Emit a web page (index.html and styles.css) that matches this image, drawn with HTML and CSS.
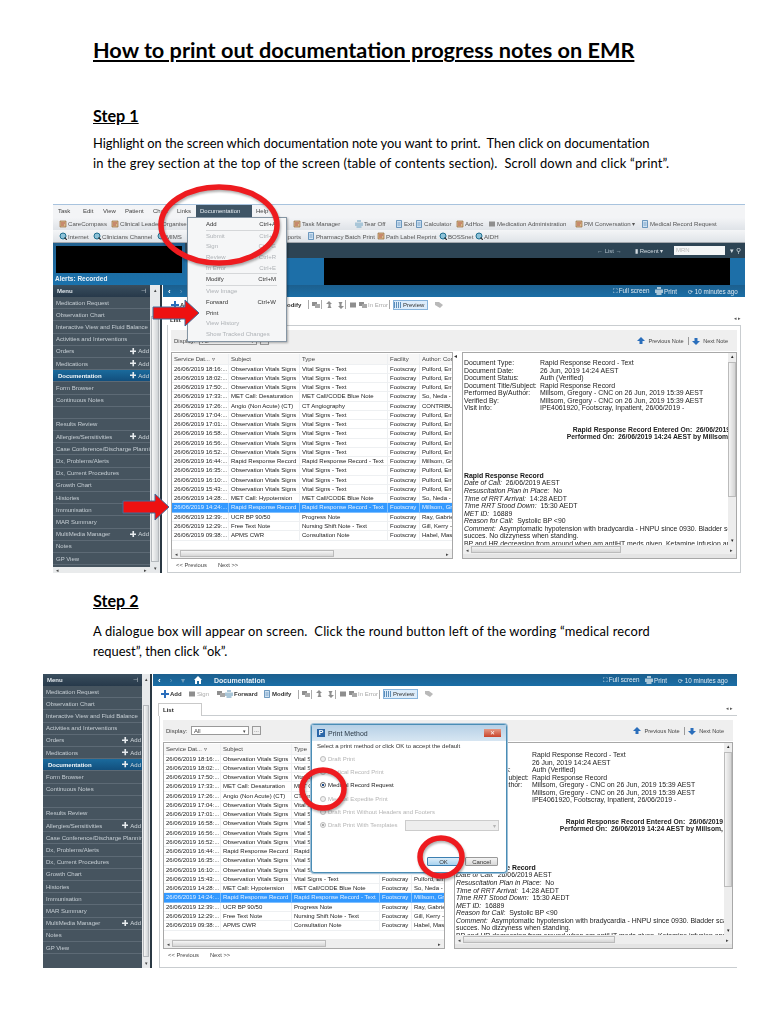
FILE: index.html
```html
<!DOCTYPE html>
<html lang="en">
<head>
<meta charset="utf-8">
<title>How to print out documentation progress notes on EMR</title>
<link rel="stylesheet" href="styles.css">
</head>
<body>
<svg class="defs" width="0" height="0" aria-hidden="true">
  <symbol id="plus" viewBox="0 0 8 8"><path d="M3 0h2v3h3v2H5v3H3V5H0V3h3z"/></symbol>
  <symbol id="globe" viewBox="0 0 8 8"><circle cx="4" cy="4" r="3" fill="#8ec2d8" stroke="#1f6f8f"/><path d="M5.500 5.500 8 8" stroke="#333" stroke-width="1.200"/></symbol>
  <symbol id="doc" viewBox="0 0 8 8"><path d="M1 1h6v6H1z" fill="#d7b98c" stroke="#9a6a3c" stroke-width=".7"/><path d="M2 3h4M2 5h3" stroke="#a33" stroke-width=".7"/></symbol>
  <symbol id="note" viewBox="0 0 8 8"><path d="M1.500.5h5v7h-5z" fill="#cfe2f2" stroke="#3c76a8" stroke-width=".7"/><path d="M2.500 3h3M2.500 5h3" stroke="#3c76a8" stroke-width=".6"/></symbol>
  <symbol id="gray" viewBox="0 0 8 8"><path d="M1 1.500h6v5H1z" fill="#8e8e8e"/></symbol>
  <symbol id="copy" viewBox="0 0 8 8"><path d="M0 1h5v4H0z" fill="#8e8e8e"/><path d="M3 3h5v4H3z" fill="#a8a8a8"/></symbol>
  <symbol id="hand" viewBox="0 0 8 8"><path d="M1 3l3-3 3 3H5.500v2l1 2h-4l1-2V3z" fill="#8e8e8e"/></symbol>
  <symbol id="tag" viewBox="0 0 8 8"><path d="M0 1h4l4 3-3 3-5-3z" fill="#b9b9b9"/></symbol>
  <symbol id="bars" viewBox="0 0 8 8"><path d="M.5 1v6M2.500 1v6M4.500 1v6M6.500 1v6" stroke="#3c76a8" stroke-width=".8"/></symbol>
  <symbol id="print" viewBox="0 0 8 8"><path d="M2 0h4v2H2zM0 2.500h8v3.500H6.500V8h-5V6H0z" fill="#a9c6d8"/></symbol>
  <symbol id="up" viewBox="0 0 8 8"><path d="M4 0l4 4H5.500v3h-3V4H0z"/></symbol>
  <symbol id="home" viewBox="0 0 8 8"><path d="M4 0l4 4H7v4H5V5H3v3H1V4H0z" fill="#fff"/></symbol>
</svg>
<main class="page">
  <h1 class="doc-title">How to print out documentation progress notes on EMR</h1>

  <h2 class="step step-one">Step 1</h2>
  <p class="lead lead-one"><span class="fit-a">Highlight on the screen which documentation note you want to print.&nbsp; Then click on documentation</span><br><span class="fit-b">in the grey section at the top of the screen (table of contents section).&nbsp; Scroll down and click “print”.</span></p>

  <section class="shot shot-one">
    <div class="app-menu">
      <span class="m-task">Task</span><span class="m-edit">Edit</span><span class="m-view">View</span><span class="m-patient">Patient</span><span class="m-chart">Chart</span><span class="m-links">Links</span><span class="m-doc">Documentation</span><span class="m-help">Help</span>
    </div>
    <div class="toolbar tb-one">
      <span class="tool"><svg class="ic"><use href="#doc"/></svg>CareCompass</span>
      <span class="tool"><svg class="ic"><use href="#doc"/></svg>Clinical Leader Organiser</span>
      <span class="tool"><svg class="ic"><use href="#doc"/></svg>Task Manager</span>
      <span class="tool"><svg class="ic"><use href="#print"/></svg>Tear Off</span>
      <span class="tool"><svg class="ic"><use href="#note"/></svg>Exit</span>
      <span class="tool"><svg class="ic"><use href="#note"/></svg>Calculator</span>
      <span class="tool"><svg class="ic"><use href="#doc"/></svg>AdHoc</span>
      <span class="tool"><svg class="ic"><use href="#gray"/></svg>Medication Administration</span>
      <span class="tool"><svg class="ic"><use href="#doc"/></svg>PM Conversation ▾</span>
      <span class="tool"><svg class="ic"><use href="#note"/></svg>Medical Record Request</span>
    </div>
    <div class="toolbar tb-two">
      <span class="tool"><svg class="ic"><use href="#globe"/></svg>Internet</span>
      <span class="tool"><svg class="ic"><use href="#globe"/></svg>Clinicians Channel</span>
      <span class="tool"><svg class="ic"><use href="#globe"/></svg>MIMS</span>
      <span class="tool tool-end">Reports</span>
      <span class="tool"><svg class="ic"><use href="#note"/></svg>Pharmacy Batch Print</span>
      <span class="tool"><svg class="ic"><use href="#doc"/></svg>Path Label Reprint</span>
      <span class="tool"><svg class="ic"><use href="#globe"/></svg>BOSSnet</span>
      <span class="tool"><svg class="ic"><use href="#globe"/></svg>AIDH</span>
    </div>
    <div class="patient-head">
      <div class="patient-left">
        <div class="redact redact-left"></div>
        <div class="alerts">Alerts: Recorded</div>
      </div>
      <div class="patient-right">
        <div class="nav-row"><span class="nav-list">← List →</span><span class="nav-recent">▮ Recent ▾</span><span class="mrn">MRN</span><span class="nav-find">▾ ⚲</span></div>
        <div class="banner-row"><div class="redact redact-right"></div></div>
      </div>
    </div>
    <div class="emr">
      <aside class="side">
        <div class="side-head"><span>Menu</span><span class="pin">⊣</span></div>
        <div class="side-item">Medication Request</div>
        <div class="side-item">Observation Chart</div>
        <div class="side-item">Interactive View and Fluid Balance</div>
        <div class="side-item">Activities and Interventions</div>
        <div class="side-item">Orders<span class="add"><svg class="plus"><use href="#plus"/></svg>Add</span></div>
        <div class="side-item">Medications<span class="add"><svg class="plus"><use href="#plus"/></svg>Add</span></div>
        <div class="side-item is-current">Documentation<span class="add"><svg class="plus"><use href="#plus"/></svg>Add</span></div>
        <div class="side-item">Form Browser</div>
        <div class="side-item">Continuous Notes</div>
        <div class="side-item"></div>
        <div class="side-item">Results Review</div>
        <div class="side-item">Allergies/Sensitivities<span class="add"><svg class="plus"><use href="#plus"/></svg>Add</span></div>
        <div class="side-item">Case Conference/Discharge Planning</div>
        <div class="side-item">Dx, Problems/Alerts</div>
        <div class="side-item">Dx, Current Procedures</div>
        <div class="side-item">Growth Chart</div>
        <div class="side-item">Histories</div>
        <div class="side-item">Immunisation</div>
        <div class="side-item">MAR Summary</div>
        <div class="side-item">MultiMedia Manager<span class="add"><svg class="plus"><use href="#plus"/></svg>Add</span></div>
        <div class="side-item">Notes</div>
        <div class="side-item">GP View</div>
        <div class="side-foot"><span>◂</span><span>▸</span></div>
      </aside>
      <div class="side-scroll"><span class="arrow-btn">▴</span><span class="thumb"></span><span class="arrow-btn">▾</span></div>
      <div class="side-rule"></div>
      <div class="main">
        <div class="band"><span class="band-nav"><b>‹</b> <i>›</i></span><span class="band-title"></span><span class="band-act band-fs">⛶ Full screen</span><span class="band-act band-pr"><svg class="ic"><use href="#print"/></svg>Print</span><span class="band-act band-tm">⟳ 10 minutes ago</span></div>
        <div class="doc-tools">
          <span class="dt"><svg class="ic ic-blue"><use href="#plus"/></svg>Add</span>
          <span class="dt dim"><svg class="ic"><use href="#gray"/></svg>Sign</span>
          <span class="dt"><svg class="ic"><use href="#copy"/></svg></span>
          <span class="dt"><svg class="ic"><use href="#print"/></svg>Forward</span>
          <span class="dt dt-sep"><svg class="ic"><use href="#note"/></svg>Modify</span>
          <span class="dt dt-sep"><svg class="ic"><use href="#copy"/></svg></span>
          <span class="dt"><svg class="ic"><use href="#hand"/></svg></span>
          <span class="dt dt-sep"><svg class="ic ic-flip"><use href="#hand"/></svg></span>
          <span class="dt"><svg class="ic"><use href="#gray"/></svg></span>
          <span class="dt dim dt-sep"><svg class="ic"><use href="#copy"/></svg>In Error</span>
          <span class="dt preview"><svg class="ic"><use href="#bars"/></svg>Preview</span>
          <span class="dt"><svg class="ic"><use href="#tag"/></svg></span>
        </div>
        <div class="tabs"><span class="tab tab-flat">List</span><span class="tab-pager">◂ ▸</span></div>
        <div class="panel">
          <div class="filter">
            <span class="disp">Display:</span><span class="combo">All<em>▾</em></span><span class="dots">...</span>
            <span class="pager"><svg class="ic ic-blue"><use href="#up"/></svg>Previous Note<i></i><svg class="ic ic-blue ic-down"><use href="#up"/></svg>Next Note</span>
          </div>
          <div class="split">
            <div class="list-col">
              <div class="grid-box">
                <div class="row row-head"><span>Service Dat... ▿</span><span>Subject</span><span>Type</span><span>Facility</span><span>Author: Cor</span></div>
                <div class="row"><span>26/06/2019 18:16:...</span><span>Observation Vitals Signs</span><span>Vital Signs - Text</span><span>Footscray</span><span>Pulford, Emily</span></div>
                <div class="row"><span>26/06/2019 18:02:...</span><span>Observation Vitals Signs</span><span>Vital Signs - Text</span><span>Footscray</span><span>Pulford, Emily</span></div>
                <div class="row"><span>26/06/2019 17:50:...</span><span>Observation Vitals Signs</span><span>Vital Signs - Text</span><span>Footscray</span><span>Pulford, Emily</span></div>
                <div class="row"><span>26/06/2019 17:33:...</span><span>MET Call: Desaturation</span><span>MET Call/CODE Blue Note</span><span>Footscray</span><span>So, Neda - Reg</span></div>
                <div class="row"><span>26/06/2019 17:26:...</span><span>Angio (Non Acute) (CT)</span><span>CT Angiography</span><span>Footscray</span><span>CONTRIBUTOR</span></div>
                <div class="row"><span>26/06/2019 17:04:...</span><span>Observation Vitals Signs</span><span>Vital Signs - Text</span><span>Footscray</span><span>Pulford, Emily</span></div>
                <div class="row"><span>26/06/2019 17:01:...</span><span>Observation Vitals Signs</span><span>Vital Signs - Text</span><span>Footscray</span><span>Pulford, Emily</span></div>
                <div class="row"><span>26/06/2019 16:58:...</span><span>Observation Vitals Signs</span><span>Vital Signs - Text</span><span>Footscray</span><span>Pulford, Emily</span></div>
                <div class="row"><span>26/06/2019 16:56:...</span><span>Observation Vitals Signs</span><span>Vital Signs - Text</span><span>Footscray</span><span>Pulford, Emily</span></div>
                <div class="row"><span>26/06/2019 16:52:...</span><span>Observation Vitals Signs</span><span>Vital Signs - Text</span><span>Footscray</span><span>Pulford, Emily</span></div>
                <div class="row"><span>26/06/2019 16:44:...</span><span>Rapid Response Record</span><span>Rapid Response Record - Text</span><span>Footscray</span><span>Millsom, Greg</span></div>
                <div class="row"><span>26/06/2019 16:35:...</span><span>Observation Vitals Signs</span><span>Vital Signs - Text</span><span>Footscray</span><span>Pulford, Emily</span></div>
                <div class="row"><span>26/06/2019 16:10:...</span><span>Observation Vitals Signs</span><span>Vital Signs - Text</span><span>Footscray</span><span>Pulford, Emily</span></div>
                <div class="row"><span>26/06/2019 15:43:...</span><span>Observation Vitals Signs</span><span>Vital Signs - Text</span><span>Footscray</span><span>Pulford, Emily</span></div>
                <div class="row"><span>26/06/2019 14:28:...</span><span>MET Call: Hypotension</span><span>MET Call/CODE Blue Note</span><span>Footscray</span><span>So, Neda - Reg</span></div>
                <div class="row is-picked"><span>26/06/2019 14:24:...</span><span>Rapid Response Record</span><span>Rapid Response Record - Text</span><span>Footscray</span><span>Millsom, Greg</span></div>
                <div class="row"><span>26/06/2019 12:39:...</span><span>UCR BP 90/50</span><span>Progress Note</span><span>Footscray</span><span>Ray, Gabriel</span></div>
                <div class="row"><span>26/06/2019 12:29:...</span><span>Free Text Note</span><span>Nursing Shift Note - Text</span><span>Footscray</span><span>Gill, Kerry - RN</span></div>
                <div class="row"><span>26/06/2019 09:38:...</span><span>APMS CWR</span><span>Consultation Note</span><span>Footscray</span><span>Habel, Mason</span></div>
                <div class="hbar"><span>◂</span><b></b><span>▸</span></div>
              </div>
              <div class="pn"><span>&lt;&lt; Previous</span><span>Next &gt;&gt;</span></div>
            </div>
            <div class="sash"><span>◂</span></div>
            <div class="preview-box">
              <div class="preview-body">
                <div class="pv-head">
                  <span>Document Type:</span><span>Rapid Response Record - Text</span>
                  <span>Document Date:</span><span>26 Jun, 2019 14:24 AEST</span>
                  <span>Document Status:</span><span>Auth (Verified)</span>
                  <span>Document Title/Subject:</span><span>Rapid Response Record</span>
                  <span>Performed By/Author:</span><span>Millsom, Gregory - CNC on 26 Jun, 2019 15:39 AEST</span>
                  <span>Verified By:</span><span>Millsom, Gregory - CNC on 26 Jun, 2019 15:39 AEST</span>
                  <span>Visit info:</span><span>IPE4061920, Footscray, Inpatient, 26/06/2019 -</span>
                </div>
                <div class="pv-sign">Rapid Response Record Entered On:&nbsp; 26/06/2019<br>Performed On:&nbsp; 26/06/2019 14:24 AEST by Millsom,</div>
                <div class="pv-note">
                  <strong>Rapid Response Record</strong><br>
                  <em>Date of Call:</em>&nbsp; 26/06/2019 AEST<br>
                  <em>Resuscitation Plan in Place:</em>&nbsp; No<br>
                  <em>Time of RRT Arrival:</em>&nbsp; 14:28 AEDT<br>
                  <em>Time RRT Stood Down:</em>&nbsp; 15:30 AEDT<br>
                  <em>MET ID:</em>&nbsp; 16889<br>
                  <em>Reason for Call:</em>&nbsp; Systolic BP &lt;90<br>
                  <em>Comment:</em>&nbsp; Asymptomatic hypotension with bradycardia - HNPU since 0930. Bladder scan<br>
                  succes. No dizzyness when standing.<br>
                  BP and HR decreasing from around when am antiHT meds given. Ketamine infusion and<br>
                  Currently Blood Pressure and Heart Rate stable.
                </div>
                <div class="pv-scroll"><span>▴</span><b></b><span>▾</span></div>
              </div>
              <div class="hbar pv-hbar"><span>◂</span><b></b><span>▸</span></div>
            </div>
          </div>
        </div>
      </div>
    </div>

    <div class="docmenu">
      <div class="dm-item">Add<kbd>Ctrl+A</kbd></div>
      <div class="dm-sep"></div>
      <div class="dm-item off">Submit<kbd>Ctrl+S</kbd></div>
      <div class="dm-item off">Sign<kbd>Ctrl+G</kbd></div>
      <div class="dm-item off">Review<kbd>Ctrl+R</kbd></div>
      <div class="dm-item off">In Error<kbd>Ctrl+E</kbd></div>
      <div class="dm-sep"></div>
      <div class="dm-item">Modify<kbd>Ctrl+M</kbd></div>
      <div class="dm-sep"></div>
      <div class="dm-item off">View Image</div>
      <div class="dm-item">Forward<kbd>Ctrl+W</kbd></div>
      <div class="dm-item">Print</div>
      <div class="dm-item off">View History</div>
      <div class="dm-item off">Show Tracked Changes</div>
    </div>
    <svg class="mark ring-menu" viewBox="0 0 126 86"><ellipse cx="63" cy="43" rx="58" ry="38"/></svg>
    <svg class="mark arrow arrow-print" viewBox="0 0 48 28"><path d="M1 8h32V1l14 13-14 13v-7H1z"/></svg>
    <svg class="mark arrow arrow-row" viewBox="0 0 48 28"><path d="M1 8h32V1l14 13-14 13v-7H1z"/></svg>
  </section>

  <h2 class="step step-two">Step 2</h2>
  <p class="lead lead-two"><span class="fit-c">A dialogue box will appear on screen.&nbsp; Click the round button left of the wording “medical record</span><br>request”, then click “ok”.</p>

  <section class="shot shot-two">
    <div class="emr">
      <aside class="side">
        <div class="side-head"><span>Menu</span><span class="pin">⊣</span></div>
        <div class="side-item">Medication Request</div>
        <div class="side-item">Observation Chart</div>
        <div class="side-item">Interactive View and Fluid Balance</div>
        <div class="side-item">Activities and Interventions</div>
        <div class="side-item">Orders<span class="add"><svg class="plus"><use href="#plus"/></svg>Add</span></div>
        <div class="side-item">Medications<span class="add"><svg class="plus"><use href="#plus"/></svg>Add</span></div>
        <div class="side-item is-current">Documentation<span class="add"><svg class="plus"><use href="#plus"/></svg>Add</span></div>
        <div class="side-item">Form Browser</div>
        <div class="side-item">Continuous Notes</div>
        <div class="side-item"></div>
        <div class="side-item">Results Review</div>
        <div class="side-item">Allergies/Sensitivities<span class="add"><svg class="plus"><use href="#plus"/></svg>Add</span></div>
        <div class="side-item">Case Conference/Discharge Planning</div>
        <div class="side-item">Dx, Problems/Alerts</div>
        <div class="side-item">Dx, Current Procedures</div>
        <div class="side-item">Growth Chart</div>
        <div class="side-item">Histories</div>
        <div class="side-item">Immunisation</div>
        <div class="side-item">MAR Summary</div>
        <div class="side-item">MultiMedia Manager<span class="add"><svg class="plus"><use href="#plus"/></svg>Add</span></div>
        <div class="side-item">Notes</div>
        <div class="side-item">GP View</div>
      </aside>
      <div class="side-scroll"><span class="arrow-btn">▴</span><span class="thumb"></span><span class="arrow-btn">▾</span></div>
      <div class="side-rule"></div>
      <div class="main">
        <div class="band"><span class="band-nav band-nav-wide"><b>‹</b><i>›</i><i>▾</i><svg class="home"><use href="#home"/></svg></span><span class="band-title">Documentation</span><span class="band-act band-fs">⛶ Full screen</span><span class="band-act band-pr"><svg class="ic"><use href="#print"/></svg>Print</span><span class="band-act band-tm">⟳ 10 minutes ago</span></div>
        <div class="doc-tools">
          <span class="dt"><svg class="ic ic-blue"><use href="#plus"/></svg>Add</span>
          <span class="dt dim"><svg class="ic"><use href="#gray"/></svg>Sign</span>
          <span class="dt"><svg class="ic"><use href="#copy"/></svg></span>
          <span class="dt"><svg class="ic"><use href="#print"/></svg>Forward</span>
          <span class="dt dt-sep"><svg class="ic"><use href="#note"/></svg>Modify</span>
          <span class="dt dt-sep"><svg class="ic"><use href="#copy"/></svg></span>
          <span class="dt"><svg class="ic"><use href="#hand"/></svg></span>
          <span class="dt dt-sep"><svg class="ic ic-flip"><use href="#hand"/></svg></span>
          <span class="dt"><svg class="ic"><use href="#gray"/></svg></span>
          <span class="dt dim dt-sep"><svg class="ic"><use href="#copy"/></svg>In Error</span>
          <span class="dt preview"><svg class="ic"><use href="#bars"/></svg>Preview</span>
          <span class="dt"><svg class="ic"><use href="#tag"/></svg></span>
        </div>
        <div class="tabs"><span class="tab">List</span><span class="tab-pager">◂ ▸</span></div>
        <div class="panel">
          <div class="filter">
            <span class="disp">Display:</span><span class="combo">All<em>▾</em></span><span class="dots">...</span>
            <span class="pager"><svg class="ic ic-blue"><use href="#up"/></svg>Previous Note<i></i><svg class="ic ic-blue ic-down"><use href="#up"/></svg>Next Note</span>
          </div>
          <div class="split">
            <div class="list-col">
              <div class="grid-box">
                <div class="row row-head"><span>Service Dat... ▿</span><span>Subject</span><span>Type</span><span>Facility</span><span>Author: Cor</span></div>
                <div class="row"><span>26/06/2019 18:16:...</span><span>Observation Vitals Signs</span><span>Vital Signs - Text</span><span>Footscray</span><span>Pulford, Emily</span></div>
                <div class="row"><span>26/06/2019 18:02:...</span><span>Observation Vitals Signs</span><span>Vital Signs - Text</span><span>Footscray</span><span>Pulford, Emily</span></div>
                <div class="row"><span>26/06/2019 17:50:...</span><span>Observation Vitals Signs</span><span>Vital Signs - Text</span><span>Footscray</span><span>Pulford, Emily</span></div>
                <div class="row"><span>26/06/2019 17:33:...</span><span>MET Call: Desaturation</span><span>MET Call/CODE Blue Note</span><span>Footscray</span><span>So, Neda - Reg</span></div>
                <div class="row"><span>26/06/2019 17:26:...</span><span>Angio (Non Acute) (CT)</span><span>CT Angiography</span><span>Footscray</span><span>CONTRIBUTOR</span></div>
                <div class="row"><span>26/06/2019 17:04:...</span><span>Observation Vitals Signs</span><span>Vital Signs - Text</span><span>Footscray</span><span>Pulford, Emily</span></div>
                <div class="row"><span>26/06/2019 17:01:...</span><span>Observation Vitals Signs</span><span>Vital Signs - Text</span><span>Footscray</span><span>Pulford, Emily</span></div>
                <div class="row"><span>26/06/2019 16:58:...</span><span>Observation Vitals Signs</span><span>Vital Signs - Text</span><span>Footscray</span><span>Pulford, Emily</span></div>
                <div class="row"><span>26/06/2019 16:56:...</span><span>Observation Vitals Signs</span><span>Vital Signs - Text</span><span>Footscray</span><span>Pulford, Emily</span></div>
                <div class="row"><span>26/06/2019 16:52:...</span><span>Observation Vitals Signs</span><span>Vital Signs - Text</span><span>Footscray</span><span>Pulford, Emily</span></div>
                <div class="row"><span>26/06/2019 16:44:...</span><span>Rapid Response Record</span><span>Rapid Response Record - Text</span><span>Footscray</span><span>Millsom, Greg</span></div>
                <div class="row"><span>26/06/2019 16:35:...</span><span>Observation Vitals Signs</span><span>Vital Signs - Text</span><span>Footscray</span><span>Pulford, Emily</span></div>
                <div class="row"><span>26/06/2019 16:10:...</span><span>Observation Vitals Signs</span><span>Vital Signs - Text</span><span>Footscray</span><span>Pulford, Emily</span></div>
                <div class="row"><span>26/06/2019 15:43:...</span><span>Observation Vitals Signs</span><span>Vital Signs - Text</span><span>Footscray</span><span>Pulford, Emily</span></div>
                <div class="row"><span>26/06/2019 14:28:...</span><span>MET Call: Hypotension</span><span>MET Call/CODE Blue Note</span><span>Footscray</span><span>So, Neda - Reg</span></div>
                <div class="row is-picked"><span>26/06/2019 14:24:...</span><span>Rapid Response Record</span><span>Rapid Response Record - Text</span><span>Footscray</span><span>Millsom, Greg</span></div>
                <div class="row"><span>26/06/2019 12:39:...</span><span>UCR BP 90/50</span><span>Progress Note</span><span>Footscray</span><span>Ray, Gabriel</span></div>
                <div class="row"><span>26/06/2019 12:29:...</span><span>Free Text Note</span><span>Nursing Shift Note - Text</span><span>Footscray</span><span>Gill, Kerry - RN</span></div>
                <div class="row"><span>26/06/2019 09:38:...</span><span>APMS CWR</span><span>Consultation Note</span><span>Footscray</span><span>Habel, Mason</span></div>
                <div class="hbar"><span>◂</span><b></b><span>▸</span></div>
              </div>
              <div class="pn"><span>&lt;&lt; Previous</span><span>Next &gt;&gt;</span></div>
            </div>
            <div class="sash"></div>
            <div class="preview-box">
              <div class="preview-body">
                <div class="pv-head">
                  <span>Document Type:</span><span>Rapid Response Record - Text</span>
                  <span>Document Date:</span><span>26 Jun, 2019 14:24 AEST</span>
                  <span>Document Status:</span><span>Auth (Verified)</span>
                  <span>Document Title/Subject:</span><span>Rapid Response Record</span>
                  <span>Performed By/Author:</span><span>Millsom, Gregory - CNC on 26 Jun, 2019 15:39 AEST</span>
                  <span>Verified By:</span><span>Millsom, Gregory - CNC on 26 Jun, 2019 15:39 AEST</span>
                  <span>Visit info:</span><span>IPE4061920, Footscray, Inpatient, 26/06/2019 -</span>
                </div>
                <div class="pv-sign">Rapid Response Record Entered On:&nbsp; 26/06/2019<br>Performed On:&nbsp; 26/06/2019 14:24 AEST by Millsom,</div>
                <div class="pv-note">
                  <strong>Rapid Response Record</strong><br>
                  <em>Date of Call:</em>&nbsp; 26/06/2019 AEST<br>
                  <em>Resuscitation Plan in Place:</em>&nbsp; No<br>
                  <em>Time of RRT Arrival:</em>&nbsp; 14:28 AEDT<br>
                  <em>Time RRT Stood Down:</em>&nbsp; 15:30 AEDT<br>
                  <em>MET ID:</em>&nbsp; 16889<br>
                  <em>Reason for Call:</em>&nbsp; Systolic BP &lt;90<br>
                  <em>Comment:</em>&nbsp; Asymptomatic hypotension with bradycardia - HNPU since 0930. Bladder scan<br>
                  succes. No dizzyness when standing.<br>
                  BP and HR decreasing from around when am antiHT meds given. Ketamine infusion and<br>
                  Currently Blood Pressure and Heart Rate stable.
                </div>
                <div class="pv-scroll"><span>▴</span><b></b><span>▾</span></div>
              </div>
              <div class="hbar pv-hbar"><span>◂</span><b></b><span>▸</span></div>
            </div>
          </div>
        </div>
      </div>
    </div>

    <div class="dialog">
      <div class="dlg-title"><span class="dlg-logo">P</span><span>Print Method</span><span class="dlg-close">✕</span></div>
      <div class="dlg-body">
        <p class="dlg-hint">Select a print method or click OK to accept the default</p>
        <label class="radio off"><i></i>Draft Print</label>
        <label class="radio off"><i></i>Medical Record Print</label>
        <label class="radio on"><i></i>Medical Record Request</label>
        <label class="radio off"><i></i>Medical Expedite Print</label>
        <label class="radio off"><i></i>Draft Print Without Headers and Footers</label>
        <div class="radio off radio-combo"><i></i>Draft Print With Templates<span class="dlg-combo">▾</span></div>
        <div class="dlg-actions"><span class="btn btn-ok">OK</span><span class="btn">Cancel</span></div>
      </div>
    </div>
    <svg class="mark ring-radio" viewBox="0 0 50 46"><ellipse cx="25" cy="23" rx="21" ry="19"/></svg>
    <svg class="mark ring-ok" viewBox="0 0 50 46"><ellipse cx="25" cy="23" rx="21" ry="19"/></svg>
  </section>
</main>
</body>
</html>
```
FILE: styles.css
```css
* { box-sizing: border-box; }
html, body { margin: 0; padding: 0; background: #fff; }
body { font-family: "Liberation Sans", Arial, sans-serif; color: #111; }
.defs { position: absolute; }
.page { width: 768px; height: 1024px; overflow: hidden; }

.doc-title, .step, .lead { font-family: Lato, "Open Sans", sans-serif; margin: 0; margin-left: 93px; color: #000; }
.doc-title { font-size: 21.7px; font-weight: 700; text-decoration: underline; line-height: 26px; padding-top: 37px; height: 63px; }
.step { font-size: 16.2px; font-weight: 700; text-decoration: underline; line-height: 20px; }
.step-one { margin-top: 43px; }
.step-two { margin-top: 18px; }
.lead { font-size: 12.9px; line-height: 20px; white-space: nowrap; }
.lead-one { margin-top: 7px; height: 71px; }
.lead-two { margin-top: 10px; height: 53px; }
.fit-a { letter-spacing: -.03px; }
.fit-b { letter-spacing: .18px; }
.fit-c { letter-spacing: .16px; }

.shot { position: relative; color: #222; filter: blur(.4px); }
.shot-one { margin-left: 53px; width: 692px; height: 369px; border-top: 1px solid #a8c3de; }
.shot-two { margin-left: 43px; width: 694px; height: 294px; }

.app-menu { height: 12px; background: #f3f4f6; display: grid; grid-template-columns: 25px 20px 22px 28px 24px 19px 56px 1fr; padding-left: 5px; font-size: 6px; line-height: 12px; color: #444; }
.m-doc { background: #3f5566; color: #e8edf1; padding-left: 4px; }
.m-help { padding-left: 4px; }

.toolbar { display: grid; align-items: center; font-size: 6.1px; color: #555; background: linear-gradient(#f4f5f7, #dfe3e8); padding-left: 6px; height: 13px; }
.tb-one { grid-template-columns: 52px 182px 62px 40px 20px 41px 32px 87px 66px 80px; }
.tb-two { grid-template-columns: 34px 64px 122px 28px 70px 62px 36px 40px; border-bottom: 1px solid #a3a8ae; }
.tool { display: flex; align-items: center; white-space: nowrap; overflow: hidden; }
.tool-end { justify-content: flex-end; padding-right: 6px; }
.ic { width: 8px; height: 8px; flex: none; margin-right: 1px; fill: #666; }
.ic-blue { fill: #2a6ebb; }
.ic-down { transform: rotate(180deg); }
.ic-flip { transform: rotate(180deg); }

.patient-head { display: grid; grid-template-columns: 132px minmax(0, 1fr); height: 42px; background: #1a6aa2; }
.patient-left { background: linear-gradient(#22618f, #1a72ad); display: flex; flex-direction: column; padding: 3px 0 0 3px; }
.redact { background: #000; }
.redact-left { width: 126px; height: 27px; }
.alerts { font-size: 6.500px; font-weight: 700; color: #e8f1f8; line-height: 12px; margin-left: -1px; }
.patient-right { display: flex; flex-direction: column; background: #1d6fa8; min-width: 0; }
.nav-row { height: 15px; background: #2d4454; display: flex; align-items: center; font-size: 6px; color: #d4dce2; white-space: nowrap; }
.nav-list { margin-left: 412px; width: 38px; color: #aebdc8; }
.nav-recent { width: 39px; }
.mrn { width: 51px; height: 9px; background: #f4f6f7; color: #bbb; padding-left: 2px; line-height: 9px; }
.nav-find { margin-left: 5px; font-size: 7px; }
.banner-row { flex: 1; display: flex; padding-left: 139px; padding-right: 15px; }
.redact-right { flex: 1; }

.emr { display: grid; grid-template-columns: 97px 10px 3px minmax(0, 1fr); background: #fff; height: 100%; }
.shot-two .emr { grid-template-columns: 99px 8px 3px minmax(0, 1fr); }
.shot-one .emr { height: 288px; }
.side { background: #46545f; color: #c6ced4; font-size: 6px; display: flex; flex-direction: column; }
.side-foot { margin-top: auto; height: 6px; background: #e9ebec; color: #444; font-size: 5px; line-height: 6px; display: flex; justify-content: space-between; padding: 0 3px; }
.side-head { height: 12px; background: linear-gradient(#3a4e5e, #27394a); display: flex; justify-content: space-between; padding: 0 4px; font-weight: 700; line-height: 12px; color: #dfe5ea; flex: none; }
.pin { font-weight: 400; font-size: 6px; }
.side-item { height: 12.2px; flex: none; display: flex; align-items: center; justify-content: space-between; padding-left: 3px; padding-right: 1px; white-space: nowrap; overflow: hidden; border-bottom: .5px solid #5d6a75; }
.is-current { background: linear-gradient(#1a6a9c, #124f7d); color: #f0f5f8; font-weight: 700; padding-left: 5px; }
.add { display: flex; align-items: center; gap: 2px; color: #cfd6db; font-weight: 400; }
.plus { width: 6.500px; height: 6.500px; fill: #e8ecef; }
.side-scroll { background: #e7e9eb; display: flex; flex-direction: column; align-items: center; font-size: 5px; color: #444; padding: 1px; }
.arrow-btn { height: 8px; line-height: 8px; }
.thumb { flex: 1; width: 100%; background: linear-gradient(90deg, #f7f7f7, #cfd3d6); margin: 22px 0 2px; border: .5px solid #b4b8bc; }
.side-rule { background: linear-gradient(90deg, #2a3843 66%, #fff 66%); }

.main { display: flex; flex-direction: column; min-width: 0; }
.band { height: 12px; background: linear-gradient(#1c5f8e, #1a6ea6); color: #dce7ef; font-size: 6.3px; display: flex; align-items: center; flex: none; }
.band-nav { width: 40px; padding-left: 5px; font-size: 8px; color: #fff; display: flex; align-items: center; gap: 9px; }
.band-nav-wide { width: 52px; }
.band-nav i { color: #6f9dbc; font-style: normal; }
.band-title { font-weight: 700; font-size: 7px; color: #e6eef4; width: 410px; padding-left: 9px; white-space: nowrap; }
.band-nav-wide + .band-title { width: 398px; }
.home { width: 8px; height: 8px; }
.band-act { white-space: nowrap; display: flex; align-items: center; }
.band-fs { width: 42px; }
.band-pr { width: 33px; }

.doc-tools { height: 15px; display: grid; grid-template-columns: 27px 29px 8px 38px 39px 13px 12px 12px 10px 34px 42px 10px; padding-left: 8px; align-items: center; font-size: 6px; font-weight: 700; color: #333; flex: none; }
.shot-two .doc-tools { height: 16px; }
.dt { display: flex; align-items: center; white-space: nowrap; }
.dt-sep { border-right: .5px solid #aaa; margin-right: 3px; height: 9px; }
.dim { color: #a8a8a8; font-weight: 400; }
.preview { background: #dcecfb; border: .5px solid #86b3dc; font-weight: 400; height: 10px; margin-right: 7px; }
.tabs { height: 13px; display: flex; justify-content: space-between; align-items: flex-end; padding: 0 4px 0 5px; font-size: 6px; font-weight: 700; flex: none; }
.tab { border: .5px solid #c9c9c9; border-bottom: 0; height: 13px; width: 44px; line-height: 13px; padding-left: 4px; background: #fff; margin-bottom: -1px; position: relative; }
.tab-flat { border-color: transparent; padding-left: 1px; }
.tab-pager { font-size: 5px; color: #555; line-height: 9px; margin-bottom: 2px; font-weight: 400; }

.panel { flex: 1; margin: 0 4px; border: 1px solid #c9cdd0; padding: 4px 3px 0; display: flex; flex-direction: column; min-height: 0; }
.shot-two .panel { margin: 0 0 0 6px; border-right: 0; padding-right: 4px; }
.filter { height: 21px; background: #efefef; display: flex; align-items: center; padding-left: 3px; font-size: 6px; color: #444; flex: none; }
.disp { width: 25px; }
.combo { width: 58px; height: 9px; background: #fff; border: .5px solid #999; display: flex; justify-content: space-between; line-height: 8px; padding: 0 2px; margin-right: 3px; }
.combo em { font-style: normal; font-size: 5px; }
.dots { width: 9px; height: 9px; border: .5px solid #999; text-align: center; line-height: 6px; }
.pager { margin-left: auto; margin-right: 9px; display: flex; align-items: center; gap: 2px; font-size: 5.6px; }
.pager i { width: .5px; height: 8px; background: #999; margin: 0 2px; }

.split { flex: 1; display: grid; grid-template-columns: 282px 9px minmax(0, 1fr); min-height: 0; margin-top: 1px; }
.list-col { display: flex; flex-direction: column; }
.grid-box { height: 207px; border: .5px solid #a8a8a8; overflow: hidden; display: flex; flex-direction: column; }
.row { display: grid; grid-template-columns: 57px 71px 88px 32px 34px; height: 9.27px; font-size: 6px; line-height: 9.27px; flex: none; }
.row span { padding-left: 2px; white-space: nowrap; overflow: hidden; border-right: .5px solid #eef0f2; border-bottom: .5px solid #eef0f2; }
.row-head { height: 11px; line-height: 11px; color: #444; background: #f7f7f7; margin-top: .5px; }
.is-picked { background: #3399ff; color: #e6f2ff; }
.is-picked span { border-color: #7fbfff; }
.hbar { margin-top: auto; height: 9px; background: #eeeeee; display: flex; align-items: center; justify-content: space-between; padding: 0 3px; font-size: 5px; position: relative; color: #444; flex: none; }
.hbar b { position: absolute; left: 8px; width: 55%; top: 1px; bottom: 1px; background: linear-gradient(#f5f5f5, #d6d6d6); border: .5px solid #bbb; }
.pn { display: flex; gap: 11px; font-size: 5.800px; color: #444; padding: 3px 0 0 5px; }
.sash { font-size: 6px; color: #333; padding-left: 1px; }

.preview-box { border: .5px solid #a8a8a8; height: 207px; display: flex; flex-direction: column; overflow: hidden; background: #e4e4e4; }
.preview-body { flex: 1; position: relative; padding: 6px 6px 0 1px; overflow: hidden; min-height: 0; font-size: 6.9px; line-height: 7.55px; color: #222; background: #fff; }
.shot-two .preview-body { padding-top: 8px; padding-right: 9px; }
.pv-head { display: grid; grid-template-columns: 76px 1fr; white-space: nowrap; }
.pv-sign { font-weight: 700; font-size: 6.8px; text-align: right; margin-top: 14px; white-space: nowrap; }
.pv-note { margin-top: 31px; white-space: nowrap; }
.pv-note strong { color: #111; }
.pv-scroll { position: absolute; right: 0; top: 0; bottom: 0; width: 8px; background: #ededed; display: flex; flex-direction: column; align-items: center; justify-content: space-between; font-size: 5px; }
.pv-scroll b { flex: 1; width: 100%; margin: 1px 0 40px; background: linear-gradient(90deg, #f5f5f5, #d4d4d4); border: .5px solid #bbb; }
.pv-hbar { margin: 0 0 4px; }

.docmenu { position: absolute; left: 134px; top: 12px; width: 100px; height: 125px; background: #f5f6f7; border: 1px solid #8595a3; box-shadow: 1px 1px 2px rgba(0,0,0,.3); padding: 1px 0 0 18px; font-size: 6px; color: #333; display: flex; flex-direction: column; }
.dm-item { height: 10.700px; line-height: 10.700px; display: flex; justify-content: space-between; padding-right: 10px; flex: none; }
.dm-item kbd { font-family: inherit; font-size: 6px; }
.dm-item.off { color: #aeb2b6; }
.dm-sep { height: 1px; background: #d5d7d9; margin-right: 9px; flex: none; }

.mark { position: absolute; overflow: visible; }
.mark ellipse { fill: none; stroke: #ee1b1f; stroke-width: 5.5px; filter: drop-shadow(1px 2px 1px rgba(0,0,0,.3)); }
.ring-menu { left: 103px; top: -23px; width: 126px; height: 86px; }
.arrow { width: 48px; height: 28px; }
.arrow path { fill: #ee1111; stroke: #3e6f9c; stroke-width: 1px; }
.arrow-print { left: 99px; top: 94px; }
.arrow-row { left: 69px; top: 288px; }

.dialog { position: absolute; left: 268px; top: 50px; width: 196px; height: 149px; background: #fff; border: 1px solid #4a8db5; box-shadow: 0 0 0 1px #9fc0d8; border-radius: 3px; display: flex; flex-direction: column; font-size: 6px; }
.dlg-title { height: 16px; background: linear-gradient(#b6d0e6, #d7e6f2); display: flex; align-items: center; gap: 3px; padding: 0 5px; font-size: 7px; color: #2a3946; flex: none; }
.dlg-logo { width: 8px; height: 8px; background: #2a66a8; color: #fff; font-weight: 700; text-align: center; line-height: 8px; font-size: 7px; }
.dlg-close { margin-left: auto; width: 17px; height: 8px; background: linear-gradient(#e59a85, #c9432a); color: #fff; font-size: 6px; line-height: 8px; text-align: center; }
.dlg-body { flex: 1; padding: 1px 5px 3px; display: flex; flex-direction: column; }
.dlg-hint { margin: 0 0 3px; height: 7px; line-height: 8px; color: #333; }
.radio { display: flex; align-items: center; gap: 2px; height: 13.3px; color: #b5b5b5; flex: none; padding-left: 3px; }
.radio i { width: 6px; height: 6px; border-radius: 50%; border: .5px solid #bdbdbd; background: #f1f1f1; flex: none; }
.radio.on { color: #222; }
.radio.on i { background: radial-gradient(circle, #1f4d8c 40%, #fff 45%); border-color: #666; }
.radio-combo i { background: radial-gradient(circle, #aaa 40%, #f1f1f1 45%); }
.dlg-combo { width: 94px; height: 11px; background: #eee; border: .5px solid #ccc; margin-left: 5px; text-align: right; padding-right: 2px; line-height: 10px; }
.dlg-actions { margin-top: auto; margin-bottom: 3px; display: flex; justify-content: flex-end; gap: 5px; padding-right: 3px; }
.btn { width: 33px; height: 9px; border: .5px solid #999; border-radius: 1px; background: linear-gradient(#f4f4f4, #d8d8d8); text-align: center; line-height: 8px; color: #333; }
.btn-ok { background: linear-gradient(#dcedf9, #a9d3ef); border-color: #3c7fb1; }
.ring-radio { left: 255px; top: 92px; width: 50px; height: 46px; }
.ring-ok { left: 373px; top: 160px; width: 50px; height: 46px; }
```
